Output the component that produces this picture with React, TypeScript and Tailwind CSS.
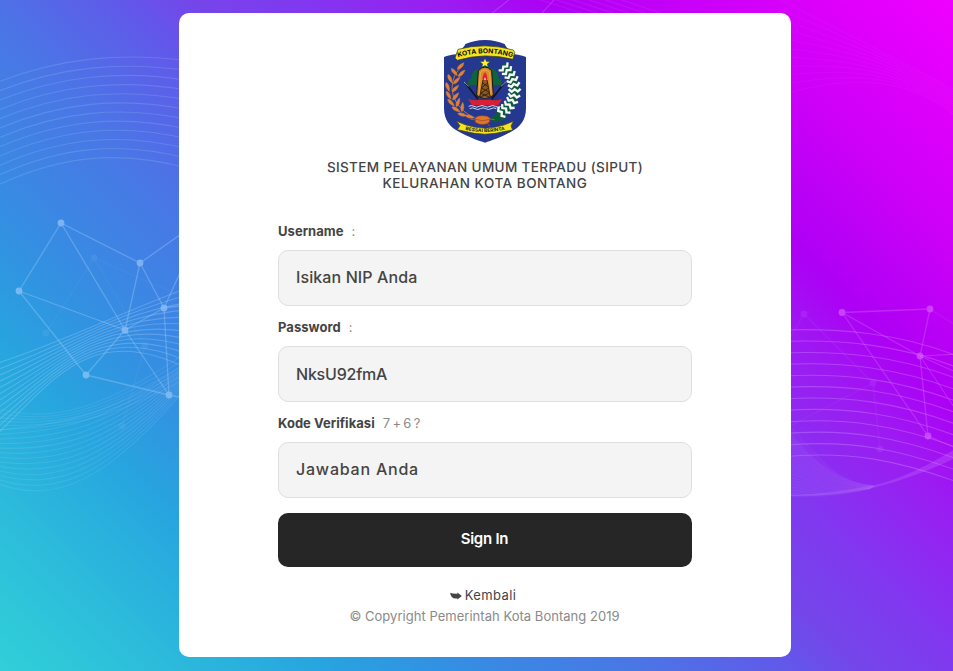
import React from "react";

type Pt = [number, number];

function lerp(a: Pt, b: Pt, t: number): string {
  return `${(a[0] + (b[0] - a[0]) * t).toFixed(1)} ${(a[1] + (b[1] - a[1]) * t).toFixed(1)}`;
}

/** A family of cubic curves blended between a first and a last curve. */
function Waves({ from, to, count, opacity, color = "#cfe6ff" }: { from: Pt[]; to: Pt[]; count: number; opacity: number; color?: string }) {
  return (
    <g stroke={color} strokeOpacity={opacity} strokeWidth="1.1" fill="none">
      {Array.from({ length: count }, (_, i) => {
        const t = i / (count - 1);
        const p = from.map((a, k) => lerp(a, to[k], t));
        return <path key={i} d={`M${p[0]} C${p[1]} ${p[2]} ${p[3]}`} />;
      })}
    </g>
  );
}

function Network({ nodes, edges, opacity, color }: { nodes: Pt[]; edges: [number, number][]; opacity: number; color: string }) {
  return (
    <g opacity={opacity}>
      {edges.map(([a, b], i) => (
        <line key={i} x1={nodes[a][0]} y1={nodes[a][1]} x2={nodes[b][0]} y2={nodes[b][1]} stroke={color} strokeWidth="1.3" strokeOpacity="0.6" />
      ))}
      {nodes.map(([x, y], i) => (
        <circle key={i} cx={x} cy={y} r="3.4" fill={color} />
      ))}
    </g>
  );
}

function Backdrop() {
  return (
    <svg className="absolute inset-0 h-[671px] w-[953px]" viewBox="0 0 953 671">
      <Waves from={[[-2, 82], [60, 58], [120, 52], [190, 61]]} to={[[-2, 185], [60, 156], [120, 149], [190, 169]]} count={12} opacity={0.16} />
      <Waves from={[[-2, 363], [60, 343], [120, 313], [190, 287]]} to={[[-2, 433], [50, 385], [90, 318], [190, 370]]} count={12} opacity={0.24} />
      <Waves from={[[-2, 430], [60, 424], [110, 418], [190, 360]]} to={[[-2, 484], [60, 505], [110, 478], [190, 384]]} count={13} opacity={0.12} />
      <Waves from={[[-2, 409], [40, 420], [90, 420], [190, 350]]} to={[[-2, 430], [60, 426], [100, 426], [190, 376]]} count={6} opacity={0.1} />
      <Network
        color="#a9d2fb"
        opacity={0.58}
        nodes={[[61, 223], [19, 291], [140, 263], [125, 330], [164, 308], [86, 375], [169, 395], [194, 225], [194, 242], [194, 304], [194, 400]]}
        edges={[[0, 1], [0, 2], [0, 3], [1, 3], [1, 5], [2, 3], [2, 4], [3, 4], [3, 5], [3, 6], [4, 6], [5, 6], [2, 7], [4, 8], [4, 9], [6, 10]]}
      />
      <Network
        color="#8cc0f5"
        opacity={0.14}
        nodes={[[94, 258], [46, 333], [145, 346], [122, 426], [190, 300]]}
        edges={[[0, 1], [0, 2], [2, 3], [0, 4]]}
      />
      <Waves from={[[780, 330], [840, 328], [900, 333], [960, 357]]} to={[[780, 457], [850, 450], [900, 461], [960, 483]]} count={12} opacity={0.24} color="#f0c8ff" />
      <Waves from={[[780, 418], [815, 445], [825, 482], [875, 486]]} to={[[780, 496], [810, 498], [835, 497], [870, 489]]} count={22} opacity={0.06} color="#c9b0ff" />
      <path d="M791 433Q830 484 875 485Q830 497 791 496Z" fill="#a070ff" fillOpacity="0.16" />
      <path d="M791 496Q870 500 960 456V446Q905 480 870 486Q830 494 791 495Z" fill="#d090ff" fillOpacity="0.22" />
      <Waves from={[[780, 0], [850, 35], [900, 60], [960, 93]]} to={[[780, 95], [850, 75], [910, 75], [960, 120]]} count={11} opacity={0.05} color="#ff9cff" />
      <path d="M491 14L510 -1M541 14L555 -1" stroke="#e0a0ff" strokeOpacity="0.35" />
      <Waves from={[[515, -8], [540, 0], [560, 6], [590, 16]]} to={[[600, -8], [620, 0], [640, 6], [670, 16]]} count={6} opacity={0.1} color="#ff9cff" />
      <Network
        color="#d96aff"
        opacity={0.6}
        nodes={[[842, 312.5], [930, 309], [920, 356], [928, 436]]}
        edges={[[0, 1], [0, 2], [0, 3], [1, 2], [2, 3]]}
      />
      <g stroke="#d96aff" strokeOpacity="0.4" fill="none">
        <path d="M920 356L960 354M920 356L960 374M920 356L960 416M928 436L960 450" />
        <path d="M930 309L960 328" strokeOpacity="0.2" />
      </g>
      <Network
        color="#c06cff"
        opacity={0.2}
        nodes={[[804, 314], [873, 383], [880, 449], [786, 345], [786, 428]]}
        edges={[[0, 3], [0, 1], [1, 2], [1, 4]]}
      />
    </svg>
  );
}

const LEFT_LEAVES: [number, number, number][] = [
  [92, 108, -45], [73, 126, 50], [95, 130, -45], [60, 146, 65], [80, 152, -45], [53, 171, 70], [76, 176, -45],
  [56, 196, 60], [77, 199, -50], [63, 218, 45], [84, 217, -70], [78, 238, 30], [97, 231, -85], [97, 254, 15], [120, 260, 12],
];

const RIGHT_CHEVRONS: [number, number, number][] = [
  [222, 112, 48], [232, 123, 50], [241, 136, 58], [248, 150, 66], [252, 165, 76], [254, 181, 88], [252, 197, 100],
  [246, 212, 114], [237, 226, 126], [226, 238, 136], [213, 248, 146],
];

function Crest() {
  return (
    <svg className="h-[120px] w-[110px] shrink-0" viewBox="0 0 330 360" role="img" aria-label="Kota Bontang">
      <path
        d="M165 30C142 30 122 36 106 42C102 54 86 63 80 73C66 74 52 77 42 81V235C42 270 60 292 88 306C120 323 145 332 165 338C185 332 210 323 242 306C270 292 288 270 288 235V81C278 77 264 74 250 73C244 63 228 54 224 42C208 36 188 30 165 30Z"
        fill="#253890"
      />
      <path d="M84 58Q165 36 250 60L254 67L249 88Q165 66 82 91L75 84Z" fill="#f4e51c" stroke="#3b3510" strokeWidth="2" />
      <path id="crest-top" d="M84 82Q165 57 250 83" fill="none" />
      <text fontFamily="Inter, 'Liberation Sans', sans-serif" fontWeight="700" fontSize="20" fill="#111">
        <textPath href="#crest-top" textLength="166" lengthAdjust="spacingAndGlyphs" startOffset="0">KOTA BONTANG</textPath>
      </text>
      <path d="M165 86l4 9h10l-8 7 3 10-9-6-9 6 3-10-8-7h10z" fill="#fff02a" />
      <path d="M115 165Q112 150 124 145Q123 120 148 116Q165 98 184 116Q207 121 206 145Q218 152 213 165Z" fill="#10633f" />
      <path d="M106 159l38 49M223 159l-38 49" stroke="#10121c" strokeWidth="5" />
      <path d="M102 156l14 13M227 156l-14 13" stroke="#b9b6b3" strokeWidth="2.5" />
      <path d="M145 122Q165 100 185 122L190 196Q165 214 140 196Z" fill="#d98b2b" stroke="#171412" strokeWidth="3" />
      <path d="M151 128Q165 112 179 128L183 192M151 128L147 192" fill="none" stroke="#f2bd56" strokeWidth="2" />
      <path d="M158 150Q165 144 172 150L181 198Q165 206 149 198Z" fill="#8c5a20" />
      <path d="M159 150L149 202M171 150L181 202M157 158L175 171M174 158L154 174M155 174L178 187M176 174L152 190M153 190L180 202M178 189L150 201" stroke="#2b1d12" strokeWidth="2.5" />
      <path d="M165 126Q175 139 171 151H159Q154 141 165 126Z" fill="#e6232b" />
      <path d="M165 142l3 7h-6z" fill="#fff" />
      <path d="M114 206Q130 213 145 210H186Q202 213 217 206L205 226H126Z" fill="#d71f35" />
      <path d="M116 229q8-5 16 0t16 0 16 0 16 0 16 0 16 0M119 236q8-5 16 0t16 0 16 0 16 0 16 0" fill="none" stroke="#cfd6ef" strokeWidth="3" />
      <path d="M101 105Q66 131 66 176Q67 225 128 263" fill="none" stroke="#c9702c" strokeWidth="3" />
      {LEFT_LEAVES.map(([x, y, r], i) => (
        <path key={i} d="M-14 0Q-4-9 14 0Q-4 9-14 0Z" transform={`translate(${x} ${y}) rotate(${r})`} fill="#e08135" stroke="#e08135" strokeWidth="1.5" />
      ))}
      <path d="M218 107Q254 140 255 180Q252 226 204 256" fill="none" stroke="#0f5a3c" strokeWidth="27" />
      <path d="M214 236L186 262Q180 277 192 277Q214 279 230 262Z" fill="#0f5a3c" />
      {RIGHT_CHEVRONS.map(([x, y, r], i) => (
        <path key={i} d="M-4-18L4-9L-3 0L4 9L-4 18" transform={`translate(${x} ${y}) rotate(${r})`} fill="none" stroke="#f3f6f3" strokeWidth="7" />
      ))}
      <path d="M135 264Q142 256 157 257Q172 256 180 264L178 277Q158 290 136 277Z" fill="#e0762d" stroke="#8b431d" strokeWidth="2" />
      <path d="M137 268Q158 277 179 268M120 267L137 270M180 267L194 269M172 280L179 288" fill="none" stroke="#b0561f" strokeWidth="3" />
      <path d="M80 274L108 285Q165 304 222 285L250 274L243 288L248 300L225 304Q165 321 105 304L82 299L90 287Z" fill="#f4e51c" stroke="#4b4515" strokeWidth="2" />
      <path id="crest-bottom" d="M104 299Q165 314 228 298" fill="none" />
      <text fontFamily="Inter, 'Liberation Sans', sans-serif" fontWeight="700" fontSize="14" fill="#222">
        <textPath href="#crest-bottom" textLength="120" lengthAdjust="spacingAndGlyphs" startOffset="2">BESSAI BERINTA</textPath>
      </text>
    </svg>
  );
}

function Label({ name, hint, hintClass }: { name: string; hint: string; hintClass: string }) {
  return (
    <label className="mt-[2px] flex h-[38px] items-center text-[13px] leading-none whitespace-pre text-[#8a8a8a]">
      <span className="pt-px text-[13px] font-bold tracking-[0.04px] text-[#444]">{name}</span>
      <span className={`ml-[8px] ${hintClass}`}>{hint}</span>
    </label>
  );
}

function Field({ text, className }: { text: string; className: string }) {
  return (
    <div className="flex h-14 items-center rounded-[10px] border border-[#dfdfdf] bg-[#f4f4f4] px-[17px] text-base font-medium text-[#444]">
      <span className={className}>{text}</span>
    </div>
  );
}

export default function App() {
  return (
    <div className="relative flex h-[671px] w-[953px] overflow-hidden bg-[linear-gradient(45deg,#31d0d8_0%,#2cbcdb_10%,#27a5df_20%,#348fe2_28%,#4b75e6_40%,#5f5bea_48%,#7446ea_53%,#8237f0_60%,#9c1bf2_69%,#ad00f5_75%,#cd00f8_85%,#e200fc_94%,#f000ff_100%)] font-[Inter,'Liberation_Sans',sans-serif]">
      <Backdrop />
      <main className="relative mt-[13px] ml-[179px] flex h-[644px] w-[612px] flex-col items-center rounded-[10px] bg-white pt-[17px]">
        <Crest />
        <h1 className="mt-[9px] flex flex-col items-center text-[13.5px] leading-4 font-medium whitespace-nowrap text-[#444]">
          <span className="tracking-[0.36px]">SISTEM PELAYANAN UMUM TERPADU (SIPUT)</span>
          <span className="tracking-[0.53px]">KELURAHAN KOTA BONTANG</span>
        </h1>
        <form className="mt-[19px] flex w-[414px] flex-col">
          <Label name="Username" hint=":" hintClass="tracking-[0px]" />
          <Field text="Isikan NIP Anda" className="pb-[2px] tracking-[0.1px]" />
          <Label name="Password" hint=":" hintClass="tracking-[0px]" />
          <Field text="NksU92fmA" className="tracking-[-0.22px]" />
          <Label name="Kode Verifikasi" hint="7 + 6 ?" hintClass="tracking-[-0.1px] [word-spacing:-1.1px]" />
          <Field text="Jawaban Anda" className="pb-[2px] tracking-[0.78px]" />
          <button type="button" className="mt-[15px] flex h-[54px] items-center justify-center rounded-[10px] bg-[#262626] pb-[2px] text-[15px] font-semibold text-white">
            <span className="pr-px tracking-[-0.25px]">Sign In</span>
          </button>
        </form>
        <footer className="mt-[18px] flex flex-col items-center text-[13px] leading-[21px] whitespace-nowrap text-[#8a8a8a]">
          <a className="mr-[4px] flex items-center gap-[3px] text-[#444]">
            <svg className="h-2 w-3" viewBox="0 0 12 8">
              <path d="M0.2 0.8Q2.5 2 7.4 1.8V0.4L11.8 4L7.4 7.6V6.5Q0.6 7.4 0.2 0.8Z" fill="#444" />
            </svg>
            <span className="tracking-[0.4px]">Kembali</span>
          </a>
          <span className="pr-px tracking-[0.03px]">© Copyright Pemerintah Kota Bontang 2019</span>
        </footer>
      </main>
    </div>
  );
}
